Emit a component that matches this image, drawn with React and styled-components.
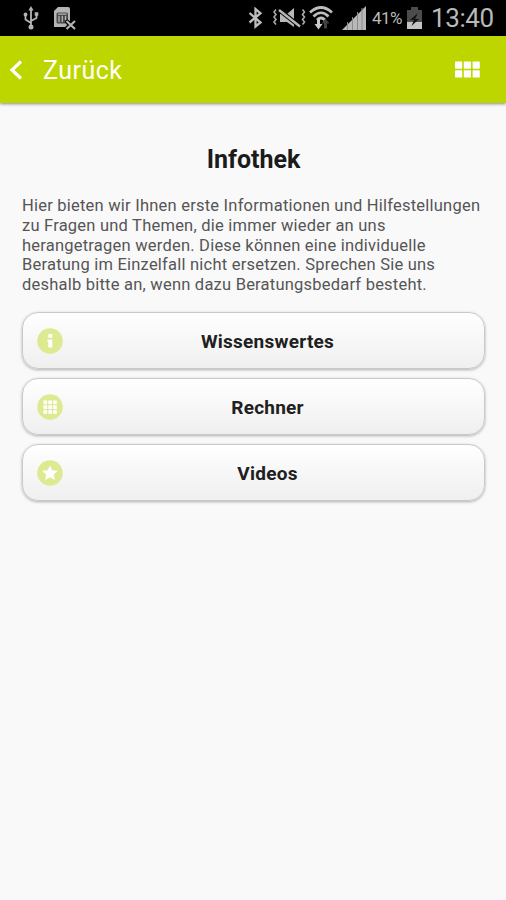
import React from "react";
import styled, { createGlobalStyle } from "styled-components";

const entries = [
  { title: "Wissenswertes", icon: "info" },
  { title: "Rechner", icon: "grid" },
  { title: "Videos", icon: "star" },
];

const UsbIcon = () => (
  <svg width="16" height="26" viewBox="0 0 16 26" fill="none" stroke="#b4b4b4" strokeWidth="1.8">
    <path d="M8 4V21M8 18L2.5 14.5V11M8 16L13.5 13V10" />
    <path d="M8 1L10.6 5.5H5.4Z" fill="#b4b4b4" stroke="none" />
    <circle cx="8" cy="22" r="2.5" fill="#b4b4b4" stroke="none" />
    <circle cx="2.5" cy="9.5" r="1.9" fill="#b4b4b4" stroke="none" />
    <path d="M11.7 7.2h3.6v3.6h-3.6z" fill="#b4b4b4" stroke="none" />
  </svg>
);

const NoSimIcon = () => (
  <svg width="24" height="25" viewBox="0 0 24 25">
    <path d="M1 21V5L5 1H15q2 0 2 2v12l-4 1 1.500 5z" fill="#b4b4b4" />
    <rect x="3.500" y="6.500" width="11.500" height="11" rx="1.500" fill="#4a4a4a" />
    <path d="M6 10v6M9.300 10v6M12.500 10v4M5 8.200h8.500" stroke="#b4b4b4" strokeWidth="1.300" fill="none" />
    <path d="M13 14.500L22 23M22 14.500L13 23" stroke="#000" strokeWidth="4" />
    <path d="M13.500 15L22 23M22 15L13.500 23" stroke="#b4b4b4" strokeWidth="2.200" />
  </svg>
);

const BluetoothIcon = () => (
  <svg width="16" height="22" viewBox="0 0 16 22" fill="none" stroke="#bdbdbd" strokeWidth="2.300">
    <path d="M1.500 6L12.500 15.500L7.500 19.500V2L12.500 6.200L1.500 15.500" />
  </svg>
);

const MuteIcon = () => (
  <svg width="34" height="24" viewBox="0 0 34 24" fill="none">
    <path d="M7 8h7l7-6v19l-7-5H7z" fill="#b8b8b8" />
    <path d="M3 3.500l-2 2.500 2 2.500-2 2.500 2 2.500-2 2.500 2 2.500M29.500 3.500l2 2.500-2 2.500 2 2.500-2 2.500 2 2.500-2 2.500" stroke="#a8a8a8" strokeWidth="1.600" />
    <path d="M6 3.800L27 20.500" stroke="#000" strokeWidth="4.600" />
    <path d="M6 4L27 20.500" stroke="#b8b8b8" strokeWidth="2.400" />
  </svg>
);

const WifiIcon = () => (
  <svg width="24" height="26" viewBox="0 0 24 26" fill="none">
    <path d="M1 7.500Q12 -2.500 23 7.500M4.500 11.500Q12 4 19.500 11.500M8 15Q12 11 16 15" stroke="#bdbdbd" strokeWidth="2.700" />
    <path d="M8 14v5H5.500l4 5.500 4-5.500H11v-5z" fill="#c8c8c8" />
    <path d="M15 23.500v-5h-2.500l4-5 4 5H18v5z" fill="#414141" />
  </svg>
);

const SignalIcon = () => (
  <svg width="25" height="25" viewBox="0 0 25 25">
    <path d="M0 24L24 0V24z" fill="#b8b8b8" />
    <path d="M5.500 16v8M10.500 11v13M15.500 6v18M20 2v22" stroke="#8a8a8a" strokeWidth="1" />
  </svg>
);

const BatteryIcon = () => (
  <svg width="17" height="24" viewBox="0 0 17 24">
    <path d="M5 1h7v3h4v19H1V4h4z" fill="#4c4c4c" />
    <path d="M1 16h15v7H1z" fill="#c4c4c4" />
    <path d="M12 7L4 14h4l-2.500 6L13 13H9z" fill="#111" />
  </svg>
);

const BackIcon = () => (
  <svg width="14" height="20" viewBox="0 0 14 20" fill="none" stroke="#fff" strokeWidth="3.200">
    <path d="M12 1.500L3 10l9 8.500" />
  </svg>
);

const MenuIcon = () => (
  <svg width="25" height="17" viewBox="0 0 25 17" fill="#fff">
    {[0, 8.8, 17.6].map((x) =>
      [0.5, 9.3].map((y) => <rect key={`${x}-${y}`} x={x} y={y} width="7.200" height="7.200" rx="0.600" />)
    )}
  </svg>
);

const EntryIcon = ({ name }) => (
  <svg width="26" height="26" viewBox="0 0 26 26" fill="#fff">
    <circle cx="13" cy="13" r="12.800" fill="#deea91" />
    {name === "info" && (
      <path d="M11.300 6h4v3.700h-4zM10.500 11.500h4.800V19.500h-4v-5.500h-.800z" />
    )}
    {name === "grid" &&
      [6.5, 11.3, 16.1].map((x) =>
        [6.5, 11.3, 16.1].map((y) => <rect key={`${x}-${y}`} x={x} y={y} width="3.700" height="3.700" />)
      )}
    {name === "star" && (
      <path d="M13 5.500l2.300 4.700 5.500.600-4.100 3.900 1.200 5.300-4.900-2.700L8.100 20l1.200-5.300L5.200 10.800l5.500-.600z" />
    )}
  </svg>
);

const App = () => {
  return (
    <>
      <GlobalStyle />
      <Screen>
        <StatusBar>
          <StatusGroup $left={23} $gap={14}>
            <UsbIcon />
            <NoSimIcon />
          </StatusGroup>
          <StatusGroup>
            <Slot $w={25}><BluetoothIcon /></Slot>
            <Slot $w={36}><MuteIcon /></Slot>
            <Slot $w={33}><WifiIcon /></Slot>
            <Slot $w={30}><SignalIcon /></Slot>
            <Percent>41%</Percent>
            <BatteryIcon />
            <Clock>13:40</Clock>
          </StatusGroup>
        </StatusBar>

        <Header>
          <Back>
            <BackIcon />
            <BackLabel>Zurück</BackLabel>
          </Back>
          <MenuIcon />
        </Header>

        <Content>
          <Title>Infothek</Title>
          <Intro>
            Hier bieten wir Ihnen erste Informationen und Hilfestellungen
            <br />
            zu Fragen und Themen, die immer wieder an uns
            <br />
            herangetragen werden. Diese können eine individuelle
            <br />
            Beratung im Einzelfall nicht ersetzen. Sprechen Sie uns
            <br />
            deshalb bitte an, wenn dazu Beratungsbedarf besteht.
          </Intro>
          <List>
            {entries.map((entry) => (
              <Entry key={entry.title}>
                <EntryIcon name={entry.icon} />
                <EntryLabel>{entry.title}</EntryLabel>
              </Entry>
            ))}
          </List>
        </Content>
      </Screen>
    </>
  );
};

const GlobalStyle = createGlobalStyle`
  * {
    box-sizing: border-box;
  }
  body {
    margin: 0;
    background: #f9f9f9;
    font-family: Roboto, "Liberation Sans", sans-serif;
  }
  svg {
    display: block;
    flex: none;
  }
`;

const Screen = styled.div`
  min-height: 900px;
  background: #f9f9f9;
`;

const StatusBar = styled.div`
  display: flex;
  justify-content: space-between;
  height: 36px;
  background: #000;
  color: #b9b9b9;
`;

const StatusGroup = styled.div`
  display: flex;
  align-items: center;
  gap: ${({ $gap }) => $gap || 0}px;
  padding-left: ${({ $left }) => $left || 0}px;
`;

const Slot = styled.div`
  width: ${({ $w }) => $w}px;
`;

const Percent = styled.span`
  width: 34px;
  font-size: 17px;
  letter-spacing: -0.5px;
`;

const Clock = styled.span`
  width: 83px;
  padding-left: 8px;
  font-size: 26px;
  letter-spacing: -0.4px;
`;

const Header = styled.header`
  display: flex;
  align-items: center;
  justify-content: space-between;
  height: 67px;
  padding: 0 26px 0 9px;
  background: #bed600;
  box-shadow: 0 1px 3px rgba(0, 0, 0, 0.45);
  color: #fff;
`;

const Back = styled.div`
  display: flex;
  align-items: center;
  gap: 20px;
`;

const BackLabel = styled.span`
  padding-top: 2px;
  font-size: 25px;
  letter-spacing: 0.5px;
`;

const Content = styled.main`
  padding: 40px 21px 0 22px;
`;

const Title = styled.h1`
  margin: 0;
  padding-top: 1px;
  font-size: 25px;
  line-height: 32px;
  font-weight: 700;
  text-align: center;
  color: #1b1b1b;
`;

const Intro = styled.p`
  margin: 20px 0 0;
  font-size: 16.5px;
  line-height: 19.8px;
  letter-spacing: 0.22px;
  color: #555;
  white-space: nowrap;
`;

const List = styled.div`
  display: flex;
  flex-direction: column;
  gap: 9px;
  margin-top: 17px;
`;

const Entry = styled.div`
  display: flex;
  align-items: center;
  height: 57px;
  padding: 2px 14px 0;
  border: 1px solid #c9c9c9;
  border-radius: 16px;
  background: linear-gradient(#fff, #efefef);
  box-shadow: 0 1px 3px rgba(0, 0, 0, 0.3);
`;

const EntryLabel = styled.span`
  flex: 1;
  padding-left: 2px;
  font-size: 19px;
  font-weight: 700;
  letter-spacing: 0.25px;
  text-align: center;
  color: #202020;
`;

export default App;
